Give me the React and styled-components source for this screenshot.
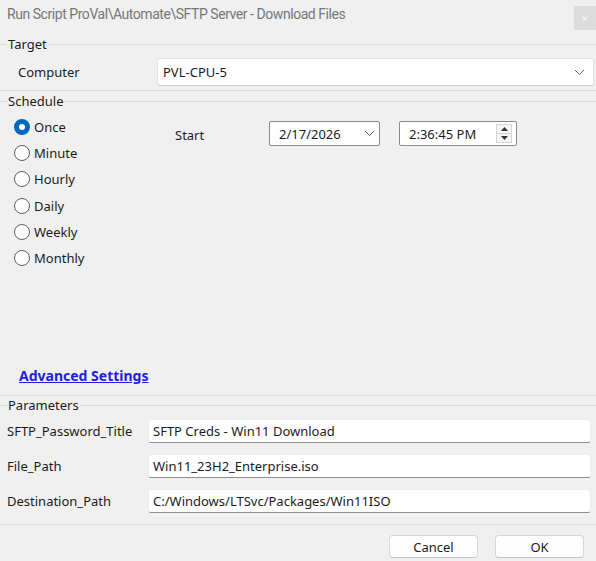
import React from "react";
import styled, { createGlobalStyle } from "styled-components";

const GlobalStyle = createGlobalStyle`
  html, body { margin: 0; padding: 0; background: #f0f0f0; }
  body { font-family: "Noto Sans", "Open Sans", sans-serif; }
`;

const Window = styled.div`
  width: 596px;
  height: 561px;
  background: #f0f0f0;
  display: flex;
  flex-direction: column;
  overflow: hidden;
  color: #1b1b1b;
  font-size: 13px;
`;

const TitleBar = styled.div`
  height: 35px;
  display: flex;
  align-items: flex-start;
  justify-content: space-between;
  padding-left: 7px;
  box-sizing: border-box;
`;

const Title = styled.span`
  font-family: Roboto, "Noto Sans", sans-serif;
  font-size: 14px;
  color: #777;
  margin-top: 6px;
  letter-spacing: -0.45px;
`;

const CloseBtn = styled.div`
  width: 22px;
  height: 24px;
  margin-top: 6px;
  background: #dcdcdc;
  color: #f4f4f4;
  font-size: 9px;
  display: flex;
  align-items: center;
  justify-content: center;
`;

const Group = styled.div`
  border-bottom: 1px solid #dadada;
  display: flex;
  flex-direction: column;
  height: ${(p) => p.$h}px;
  box-sizing: border-box;
  margin-top: ${(p) => p.$top || 0}px;
`;

const GroupHeader = styled.div`
  height: 18px;
  display: flex;
  align-items: center;
  flex-shrink: 0;
  &::before {
    content: "";
    width: 7px;
    border-top: 1px solid #dadada;
  }
  &::after {
    content: "";
    flex: 1;
    border-top: 1px solid #dadada;
  }
`;

const GroupLabel = styled.span`
  padding: 0 1px;
  color: #1b1b1b;
`;

const FieldRow = styled.div`
  display: flex;
  align-items: center;
  margin-top: ${(p) => p.$top || 0}px;
`;

const FieldLabel = styled.span`
  width: ${(p) => p.$w}px;
  padding-left: ${(p) => p.$pl || 0}px;
  box-sizing: border-box;
  flex-shrink: 0;
`;

const Select = styled.div`
  width: 437px;
  height: 28px;
  background: #fff;
  border: 1px solid #e3e3e3;
  border-bottom-color: #c8c8c8;
  border-radius: 3px;
  box-sizing: border-box;
  display: flex;
  align-items: center;
  justify-content: space-between;
  padding: 0 8px 0 5px;
`;

const TextBox = styled.div`
  width: 443px;
  height: 24px;
  background: #fff;
  border: 1px solid #ececec;
  border-bottom: 1px solid #8f8f8f;
  border-radius: 3px;
  box-sizing: border-box;
  display: flex;
  align-items: center;
  padding-left: 4px;
`;

const ScheduleBody = styled.div`
  display: flex;
  padding-top: 4px;
`;

const RadioList = styled.div`
  display: flex;
  flex-direction: column;
  padding-left: 14px;
  width: 175px;
  box-sizing: border-box;
`;

const RadioRow = styled.label`
  height: 26.2px;
  display: flex;
  align-items: center;
  gap: 4px;
`;

const RadioDot = styled.span`
  width: 16px;
  height: 16px;
  border-radius: 50%;
  box-sizing: border-box;
  flex-shrink: 0;
  border: ${(p) => (p.$on ? "5px solid #0067c0" : "1px solid #5f5f5f")};
  background: #fff;
`;

const StartRow = styled.div`
  display: flex;
  align-items: center;
  margin-top: 7px;
  height: 25px;
`;

const StartLabel = styled.span`
  width: 94px;
  margin-top: 3px;
`;

const Picker = styled.div`
  width: ${(p) => p.$w}px;
  height: 25px;
  margin-right: ${(p) => p.$mr || 0}px;
  background: #fff;
  border: 1px solid #8a8a8a;
  border-radius: 2px;
  box-sizing: border-box;
  display: flex;
  align-items: center;
  justify-content: space-between;
  padding: 0 4px 0 9px;
`;

const Spin = styled.div`
  width: 16px;
  height: 19px;
  display: flex;
  flex-direction: column;
  border: 1px solid #d4d4d4;
  box-sizing: border-box;
  background: #f6f6f6;
`;

const SpinHalf = styled.div`
  flex: 1;
  display: flex;
  align-items: center;
  justify-content: center;
  & + & { border-top: 1px solid #d4d4d4; }
`;

const LinkRow = styled.div`
  margin-top: auto;
  padding: 0 0 10px 19px;
`;

const AdvLink = styled.a`
  color: #1f1fe0;
  font-weight: 700;
  font-size: 14px;
  text-decoration: underline;
`;

const ParamRows = styled.div`
  display: flex;
  flex-direction: column;
  gap: 11px;
  padding-top: 5px;
`;

const Footer = styled.div`
  display: flex;
  justify-content: flex-end;
  gap: 17px;
  padding: 10px 12px 0 0;
`;

const Button = styled.div`
  width: 89px;
  height: 23px;
  background: #fdfdfd;
  border: 1px solid #d6d6d6;
  border-bottom-color: #c2c2c2;
  border-radius: 4px;
  box-sizing: border-box;
  display: flex;
  align-items: center;
  justify-content: center;
`;

const Chevron = () => (
  <svg width="11" height="7" viewBox="0 0 11 7">
    <path d="M1 1l4.5 4.5L10 1" fill="none" stroke="#606060" strokeWidth="1" />
  </svg>
);

const Tri = ({ up }) => (
  <svg width="7" height="4" viewBox="0 0 7 4">
    <path d={up ? "M0 4L3.5 0 7 4z" : "M0 0h7L3.5 4z"} fill="#333" />
  </svg>
);

const schedules = ["Once", "Minute", "Hourly", "Daily", "Weekly", "Monthly"];

const params = [
  ["SFTP_Password_Title", "SFTP Creds - Win11 Download"],
  ["File_Path", "Win11_23H2_Enterprise.iso"],
  ["Destination_Path", "C:/Windows/LTSvc/Packages/Win11ISO"],
];

export default function App() {
  return (
    <>
      <GlobalStyle />
      <Window>
        <TitleBar>
          <Title>Run Script ProVal\Automate\SFTP Server - Download Files</Title>
          <CloseBtn>✕</CloseBtn>
        </TitleBar>

        <Group $h={56}>
          <GroupHeader>
            <GroupLabel>Target</GroupLabel>
          </GroupHeader>
          <FieldRow $top={5}>
            <FieldLabel $w={157} $pl={18}>Computer</FieldLabel>
            <Select>
              <span>PVL-CPU-5</span>
              <Chevron />
            </Select>
          </FieldRow>
        </Group>

        <Group $h={304} $top={1}>
          <GroupHeader>
            <GroupLabel>Schedule</GroupLabel>
          </GroupHeader>
          <ScheduleBody>
            <RadioList>
              {schedules.map((s, i) => (
                <RadioRow key={s}>
                  <RadioDot $on={i === 0} />
                  {s}
                </RadioRow>
              ))}
            </RadioList>
            <StartRow>
              <StartLabel>Start</StartLabel>
              <Picker $w={111} $mr={19}>
                <span>2/17/2026</span>
                <Chevron />
              </Picker>
              <Picker $w={118}>
                <span>2:36:45 PM</span>
                <Spin>
                  <SpinHalf><Tri up /></SpinHalf>
                  <SpinHalf><Tri /></SpinHalf>
                </Spin>
              </Picker>
            </StartRow>
          </ScheduleBody>
          <LinkRow>
            <AdvLink href="#">Advanced Settings</AdvLink>
          </LinkRow>
        </Group>

        <Group $h={129}>
          <GroupHeader>
            <GroupLabel>Parameters</GroupLabel>
          </GroupHeader>
          <ParamRows>
            {params.map(([k, v]) => (
              <FieldRow key={k}>
                <FieldLabel $w={148} $pl={7}>{k}</FieldLabel>
                <TextBox>{v}</TextBox>
              </FieldRow>
            ))}
          </ParamRows>
        </Group>

        <Footer>
          <Button>Cancel</Button>
          <Button>OK</Button>
        </Footer>
      </Window>
    </>
  );
}
